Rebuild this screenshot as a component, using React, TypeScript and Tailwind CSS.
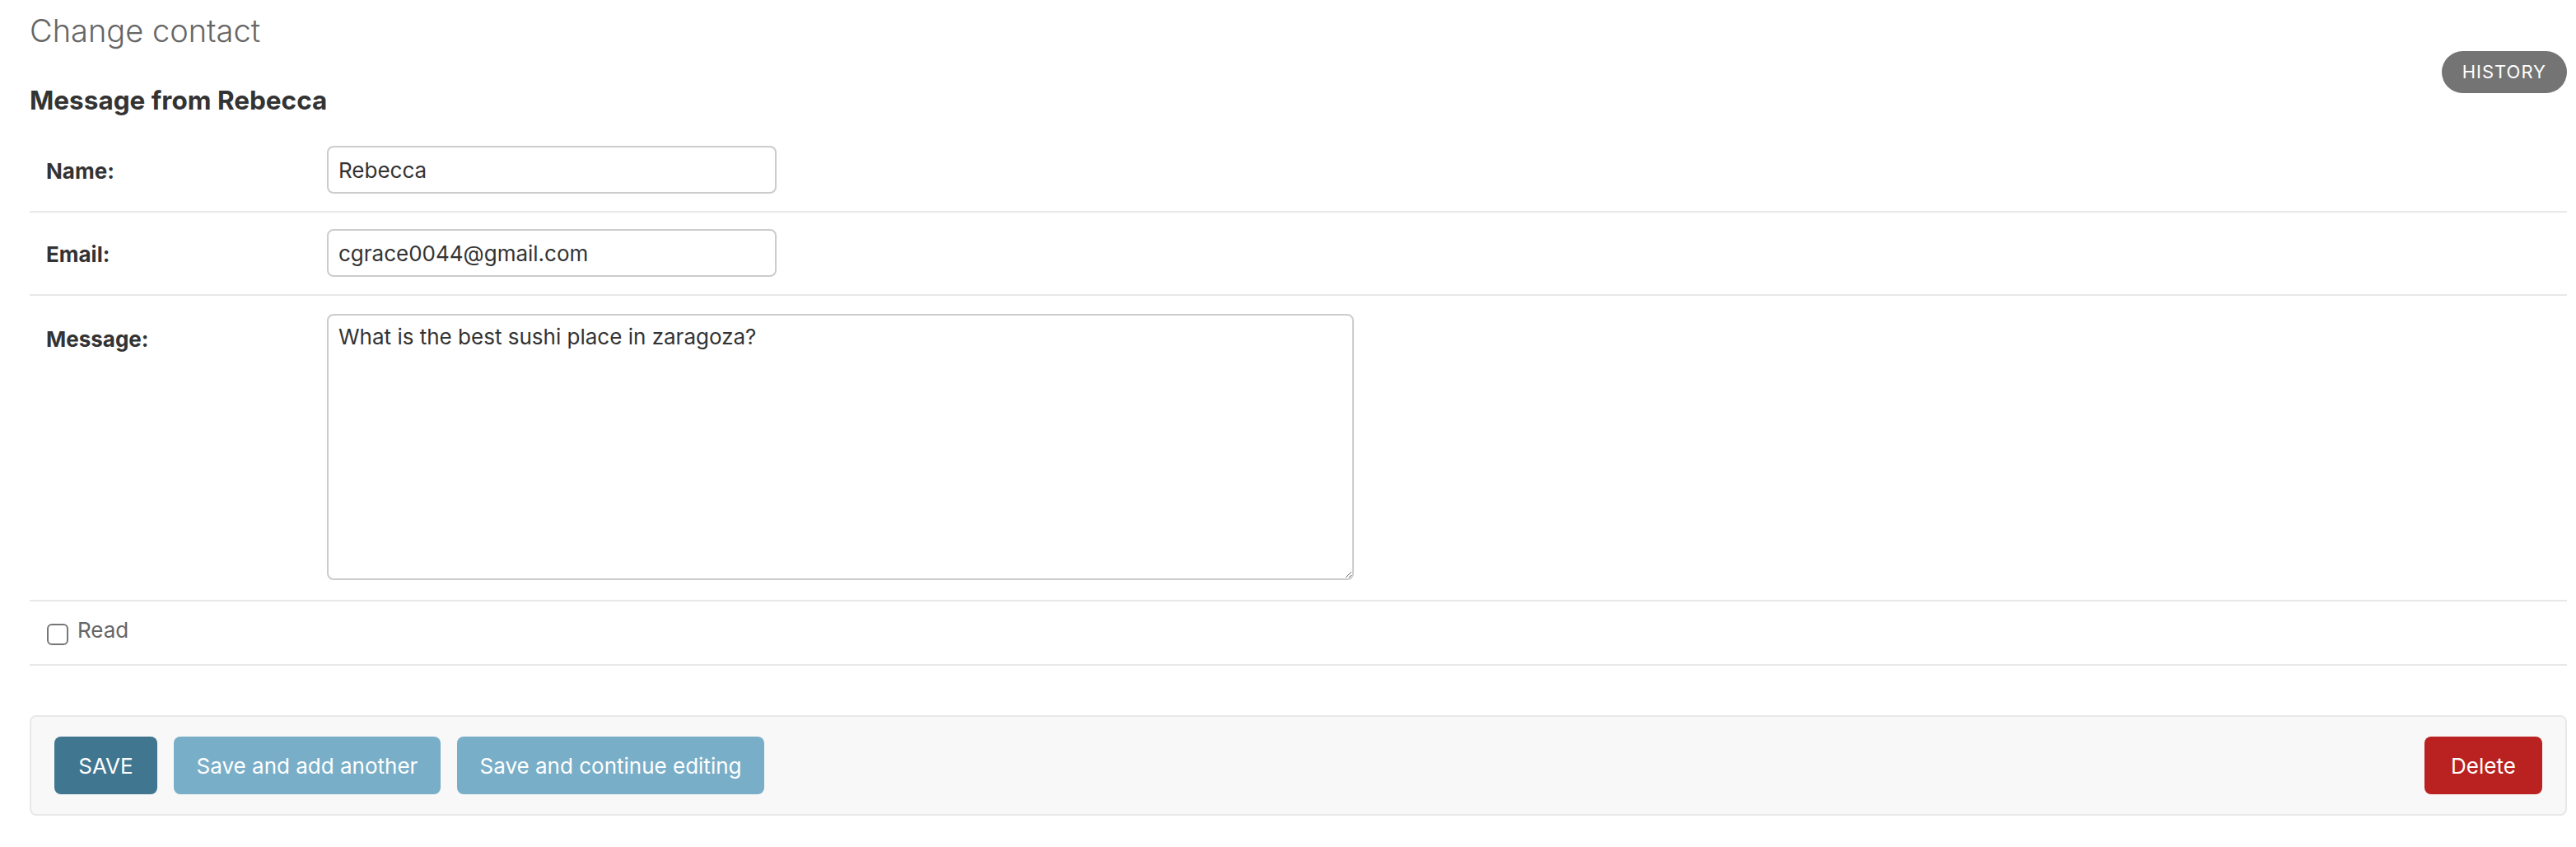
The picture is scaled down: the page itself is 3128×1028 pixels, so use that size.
import React from "react";

function Row({
  label,
  children,
  className = "",
  labelPad = "pt-[15px]",
}: {
  label: string;
  children: React.ReactNode;
  className?: string;
  labelPad?: string;
}) {
  return (
    <div className={`flex items-start border-b-2 border-[#e8e8e8] box-border ${className}`}>
      <label className={`w-[361px] shrink-0 pl-[20px] ${labelPad} text-[26px] leading-[32px] font-bold text-[#333]`}>
        {label}
      </label>
      {children}
    </div>
  );
}

export default function App() {
  return (
    <div className="min-h-screen bg-white font-['Inter','Noto_Sans',sans-serif] text-[#333]">
      <div className="pl-[36px] pr-[11px]">
        <div className="flex justify-between items-start">
          <div>
            <h1 className="mt-[13px] text-[38px] leading-[48px] font-light text-[#666]">Change contact</h1>
            <h2 className="mt-[41px] text-[31.5px] leading-[40px] font-bold text-[#333]">Message from Rebecca</h2>
          </div>
          <a className="mt-[62px] h-[51px] px-[25px] flex items-center rounded-full bg-[#747474] text-white text-[22px] tracking-[1px] uppercase">
            History
          </a>
        </div>

        <div className="mt-[15px]">
          <Row label="Name:" className="h-[101px] pt-[20px]">
            <input
              defaultValue="Rebecca"
              className="w-[546px] h-[58px] border-2 border-[#cccccc] rounded-[8px] px-[12px] text-[26px] text-[#333] bg-white outline-none"
            />
          </Row>
          <Row label="Email:" className="h-[101px] pt-[20px]">
            <input
              defaultValue="cgrace0044@gmail.com"
              className="w-[546px] h-[58px] border-2 border-[#cccccc] rounded-[8px] px-[12px] text-[26px] text-[#333] bg-white outline-none"
            />
          </Row>
          <Row label="Message:" className="h-[371px] pt-[22px]">
            <textarea
              defaultValue="What is the best sushi place in zaragoza?"
              className="w-[1247px] h-[323px] border-2 border-[#cccccc] rounded-[8px] px-[12px] py-[10px] text-[26px] leading-[32px] text-[#333] bg-white outline-none resize-y"
            />
          </Row>
          <div className="flex items-start h-[78px] box-border border-b-2 border-[#e8e8e8] pt-[19px] pl-[21px]">
            <input
              type="checkbox"
              className="appearance-none mt-[8px] w-[26px] h-[26px] rounded-[6px] border-2 border-[#767676] bg-white"
            />
            <label className="ml-[11px] text-[26px] leading-[32px] text-[#666]">Read</label>
          </div>
        </div>

        <div className="mt-[60px] flex items-center gap-[20px] border-2 border-[#e8e8e8] bg-[#f8f8f8] rounded-[8px] px-[28px] py-[24px]">
          <button className="w-[125px] h-[70px] rounded-[8px] bg-[#417690] text-white text-[26px] uppercase">Save</button>
          <button className="w-[324px] h-[70px] rounded-[8px] bg-[#79aec8] text-white text-[26px]">Save and add another</button>
          <button className="w-[373px] h-[70px] rounded-[8px] bg-[#79aec8] text-white text-[26px]">Save and continue editing</button>
          <div className="flex-1" />
          <a className="w-[143px] h-[70px] rounded-[8px] bg-[#ba2121] text-white text-[26px] flex items-center justify-center">Delete</a>
        </div>
      </div>
    </div>
  );
}
